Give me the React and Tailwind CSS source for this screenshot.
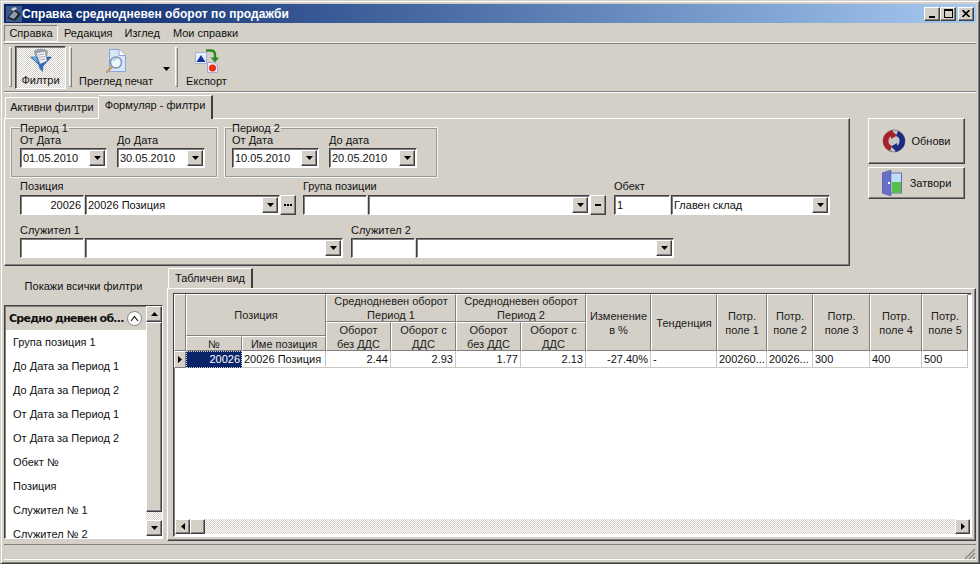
import React from "react";

const raised = "border border-t-white border-l-white border-r-[#404040] border-b-[#404040] shadow-[inset_-1px_-1px_0_#808080]";
const sunken = "border border-t-[#404040] border-l-[#404040] border-r-white border-b-white shadow-[inset_1px_1px_0_#808080]";
const dither = "bg-[repeating-conic-gradient(#d4d0c8_0_25%,#ffffff_0_50%)] bg-[length:2px_2px]";

function Triangle({ dir = "down" }) {
  const points = { down: "0,0 7,0 3.5,4", up: "3.5,0 7,4 0,4", left: "4,0 4,7 0,3.5", right: "0,0 4,3.5 0,7" };
  const size = dir === "down" || dir === "up" ? [7, 4] : [4, 7];
  return (
    <svg width={size[0]} height={size[1]} viewBox={`0 0 ${size[0]} ${size[1]}`}>
      <polygon points={points[dir]} fill="#000" />
    </svg>
  );
}

function SmallButton({ className = "w-4", children }) {
  return <div className={`${raised} bg-[#d4d0c8] flex items-center justify-center shrink-0 ${className}`}>{children}</div>;
}

function Input({ className, text, right }) {
  return (
    <div className={`${sunken} bg-white h-5 flex items-center px-[2px] shrink-0 ${right ? "justify-end" : ""} ${className}`}>
      {text}
    </div>
  );
}

function Combo({ className, text }) {
  return (
    <div className={`${sunken} bg-white h-5 flex items-center justify-between pl-[2px] pr-[1px] shrink-0 ${className}`}>
      <span>{text}</span>
      <SmallButton className="w-4 h-4">
        <Triangle />
      </SmallButton>
    </div>
  );
}

function Period({ title, className, from, to, toLabel }) {
  return (
    <fieldset className={`border border-[#9a9a94] shadow-[0_0_0_1px_#f4f3ef] rounded-none h-[55px] px-2 ${className}`}>
      <legend className="ml-0 px-0 h-3 leading-3 pr-px">{title}</legend>
      <div className="flex gap-[10px]">
        <div className="flex flex-col">
          <div className="h-[14px] leading-[13px]">От Дата</div>
          <Combo className="w-[87px]" text={from} />
        </div>
        <div className="flex flex-col">
          <div className="h-[14px] leading-[13px]">{toLabel}</div>
          <Combo className="w-[88px]" text={to} />
        </div>
      </div>
    </fieldset>
  );
}

function Labeled({ label, className, tall, children }) {
  return (
    <div className={`flex flex-col ${className}`}>
      <div className={`${tall ? "h-[16px]" : "h-[15px]"} leading-[14px]`}>{label}</div>
      <div className="flex gap-px">{children}</div>
    </div>
  );
}

function AppIcon() {
  return (
    <svg width="16" height="16" viewBox="0 0 16 16">
      <rect width="16" height="16" fill="#3d5a86" />
      <path d="M1 12 L8 3 L15 8 L9 15 Z" fill="#20242c" />
      <path d="M3 11 L8 5 L12 8 L8 13 Z" fill="#8f9bb0" />
      <path d="M5 3 L9 1 L11 3 L7 5 Z" fill="#c9d2e0" />
    </svg>
  );
}

function FilterIcon() {
  return (
    <svg width="22" height="24" viewBox="0 0 22 24">
      <path d="M0.5 9 L21.5 9 L13 18 L12.5 23.5 L9.5 20 L9 17 Z" fill="#2f6fc0" stroke="#1c4c90" strokeWidth="0.5" />
      <path d="M4 3 C7 0 15 0 18 3 L17 9 L5 9 Z" fill="#9aa0a8" />
      <path d="M6 5 L15 3 L17 13 L10 16 Z" fill="#f0f2f6" stroke="#7d8694" strokeWidth="0.6" />
      <path d="M8 7 L14 6 M8.5 9.5 L15 8.5 M9.5 12 L15 11" stroke="#8a92a0" strokeWidth="0.7" />
      <path d="M2 9 L6 8 L8 14 L5 13 Z" fill="#70a8e0" />
    </svg>
  );
}

function PreviewIcon() {
  return (
    <svg width="20" height="24" viewBox="0 0 20 24">
      <path d="M3.5 0.5 H13 L19.5 6.5 V22.5 H3.5 Z" fill="#d8e6fa" stroke="#8aa6d8" />
      <path d="M13 0.5 V6.5 H19.5" fill="#fff" stroke="#8aa6d8" />
      <path d="M5.5 18.5 L1 23" stroke="#c89860" strokeWidth="2.4" strokeLinecap="round" />
      <circle cx="10" cy="13.5" r="5.5" fill="#eef6ff" stroke="#7f8fa8" strokeWidth="1.4" />
      <path d="M7 12 A3.5 3.5 0 0 1 11 10" stroke="#9cc4ee" strokeWidth="1.1" fill="none" />
    </svg>
  );
}

function ExportIcon() {
  return (
    <svg width="24" height="24" viewBox="0 0 24 24">
      <rect x="0.5" y="3.5" width="11" height="11" fill="#e6eefc" stroke="#a4b4d8" />
      <polygon points="6,6 10.5,13 1.5,13" fill="#12359a" />
      <path d="M11 1.5 H16 Q20 1.5 20 6 V9" stroke="#2b8a1e" strokeWidth="2.4" fill="none" />
      <polygon points="15.5,8.5 24,8.5 20,13.5" fill="#2b8a1e" />
      <path d="M12.5 13.5 H19 L22.5 16 V23.5 H12.5 Z" fill="#e8e8f4" stroke="#a8a8c4" />
      <circle cx="17.5" cy="19" r="3.5" fill="#ee2a10" />
    </svg>
  );
}

function RefreshIcon() {
  return (
    <svg width="24" height="24" viewBox="0 0 24 24">
      <circle cx="12" cy="12" r="11" fill="#c8c4c8" stroke="#70707a" strokeWidth="0.8" />
      <path d="M11 4 A8 8 0 0 0 9 19.5" stroke="#a8202a" strokeWidth="5.5" fill="none" />
      <polygon points="9,1 15,6.5 9,10" fill="#a8202a" />
      <path d="M13 20 A8 8 0 0 0 15 4.5" stroke="#1c2a80" strokeWidth="5.5" fill="none" />
      <polygon points="15,23 9,17.5 15,14" fill="#1c2a80" />
    </svg>
  );
}

function DoorIcon() {
  return (
    <svg width="20" height="26" viewBox="0 0 20 26">
      <rect x="6" y="3" width="13.5" height="20" fill="#bfe0f4" stroke="#6870b8" />
      <rect x="10" y="12" width="9" height="11" fill="#58c048" />
      <polygon points="0,3 9,0 9,26 0,23" fill="#6a70c8" stroke="#4a4e98" strokeWidth="0.5" />
      <rect x="6" y="12" width="2" height="2" fill="#fff" />
    </svg>
  );
}

function Menu() {
  return (
    <div className="h-[19px] flex items-center pt-[1px]">
      <div className="border border-t-[#808080] border-l-[#808080] border-r-white border-b-white h-[17px] w-[54px] flex items-center justify-center">
        Справка
      </div>
      <div className="ml-[6px]">Редакция</div>
      <div className="ml-[12px]">Изглед</div>
      <div className="ml-[13px]">Мои справки</div>
    </div>
  );
}

function Grip() {
  return <div className="w-[3px] h-[40px] border border-t-white border-l-white border-r-[#808080] border-b-[#808080] shrink-0" />;
}

function Toolbar() {
  return (
    <div className="h-[50px] border-t border-t-[#f4f3ef] border-b border-b-[#808080] shadow-[0_1px_0_#fff,inset_0_1px_0_#808080] flex items-center pl-[5px]">
      <Grip />
      <div className={`${sunken} ${dither} w-[51px] h-[43px] ml-[3px] flex flex-col items-center justify-end pb-[2px] gap-[3px]`}>
        <FilterIcon />
        <span className="leading-[11px]">Филтри</span>
      </div>
      <div className="w-[3px]" />
      <Grip />
      <div className="w-[103px] h-[43px] flex items-center pl-[7px] shrink-0">
        <div className="w-[75px] h-[43px] flex flex-col justify-end pb-[2px] gap-[3px] items-start">
          <div className="ml-[27px]"><PreviewIcon /></div>
          <span className="leading-[11px] whitespace-nowrap">Преглед печат</span>
        </div>
        <div className="ml-[9px] mt-[3px]"><Triangle /></div>
      </div>
      <Grip />
      <div className="w-[43px] ml-[7px] h-[43px] flex flex-col items-center justify-end pb-[2px] gap-[3px]">
        <ExportIcon />
        <span className="leading-[11px]">Експорт</span>
      </div>
    </div>
  );
}

function FormPanel() {
  return (
    <div className="flex mt-[3px] h-[171px]">
      <div className="w-[846px] flex flex-col">
        <div className="h-[23px] flex items-end pl-[1px]">
          <div className="h-[21px] w-[94px] border-t border-l border-white border-r border-r-white flex items-center justify-center pb-[1px]">
            Активни филтри
          </div>
          <div className="h-[24px] w-[114px] border-t border-t-white border-r-2 border-r-[#404040] -mb-px bg-[#d4d0c8] flex items-center justify-center pb-[4px] relative z-10">
            Формуляр - филтри
          </div>
        </div>
        <div className="flex-1 border border-t-white border-l-white border-r-[#404040] border-b-[#404040] shadow-[inset_-1px_-1px_0_#808080] pl-[6px] pt-[3px]">
          <div className="flex gap-[8px]">
            <Period title="Период 1" className="w-[206px]" from="01.05.2010" to="30.05.2010" toLabel="До Дата" />
            <Period title="Период 2" className="w-[212px] pl-[6px]" from="10.05.2010" to="20.05.2010" toLabel="До дата" />
          </div>
          <div className="flex gap-[7px] pl-[9px] mt-[2px]">
            <Labeled tall label="Позиция" className="w-[276px]">
              <Input className="w-[64px]" text="20026" right />
              <Combo className="w-[195px]" text="20026 Позиция" />
              <SmallButton className="w-4 h-5 -ml-px gap-px">
                <div className="w-[2px] h-[2px] bg-black" />
                <div className="w-[2px] h-[2px] bg-black" />
                <div className="w-[2px] h-[2px] bg-black" />
              </SmallButton>
            </Labeled>
            <Labeled tall label="Група позиции" className="w-[304px]">
              <Input className="w-[64px]" />
              <Combo className="w-[222px]" />
              <SmallButton className="w-4 h-5 -ml-px">
                <div className="w-[6px] h-[2px] bg-black" />
              </SmallButton>
            </Labeled>
            <Labeled tall label="Обект" className="w-[216px]">
              <Input className="w-[56px]" text="1" />
              <Combo className="w-[159px]" text="Главен склад" />
            </Labeled>
          </div>
          <div className="flex gap-[8px] pl-[9px] mt-[8px]">
            <Labeled label="Служител 1" className="w-[323px]">
              <Input className="w-[64px]" />
              <Combo className="w-[258px]" />
            </Labeled>
            <Labeled label="Служител 2" className="w-[323px]">
              <Input className="w-[64px]" />
              <Combo className="w-[258px]" />
            </Labeled>
          </div>
        </div>
      </div>
      <div className="ml-[18px] w-[97px] pt-[23px] flex flex-col gap-[3px]">
        <div className={`${raised} h-[46px] flex items-center justify-center gap-[5px]`}>
          <RefreshIcon />
          <span>Обнови</span>
        </div>
        <div className={`${raised} h-[32px] flex items-center justify-center gap-[8px]`}>
          <DoorIcon />
          <span>Затвори</span>
        </div>
      </div>
    </div>
  );
}

const filters = [
  "Група позиция 1",
  "До Дата за Период 1",
  "До Дата за Период 2",
  "От Дата за Период 1",
  "От Дата за Период 2",
  "Обект №",
  "Позиция",
  "Служител № 1",
  "Служител № 2",
];

function FilterList() {
  return (
    <div className="w-[159px] shrink-0 flex flex-col">
      <div className="h-[39px] flex items-center justify-center pt-[1px]">Покажи всички филтри</div>
      <div className={`${sunken} h-[234px] bg-white flex overflow-hidden`}>
        <div className="flex-1 overflow-hidden">
          <div className="h-[23px] mt-px ml-px bg-[#d4d0c8] flex items-center justify-between pl-[3px] pr-[4px]">
            <span className="font-bold font-['DejaVu_Sans',sans-serif] text-[11px] tracking-[-0.75px] whitespace-nowrap">Средно дневен об...</span>
            <div className="w-[15px] h-[15px] rounded-full bg-white border border-[#808080] flex items-center justify-center">
              <svg width="9" height="7" viewBox="0 0 9 7">
                <path d="M1 6 L4.5 1.5 L8 6" stroke="#202020" strokeWidth="1.2" fill="none" />
              </svg>
            </div>
          </div>
          {filters.map((f) => (
            <div key={f} className="h-6 pl-[8px] flex items-center whitespace-nowrap">
              {f}
            </div>
          ))}
        </div>
        <div className="w-4 shrink-0 flex flex-col pb-[2px]">
          <SmallButton className="w-4 h-4"><Triangle dir="up" /></SmallButton>
          <div className={`${raised} bg-[#d4d0c8] w-4 h-[190px]`} />
          <div className={`${dither} flex-1`} />
          <SmallButton className="w-4 h-4"><Triangle /></SmallButton>
        </div>
      </div>
    </div>
  );
}

const head = "bg-[#d4d0c8] border-r border-b border-r-[#808080] border-b-[#808080] border-t border-l border-t-white border-l-white flex items-center justify-center text-center leading-[14px] text-[#202020]";
const cell = "bg-white border-r border-b border-[#c8c8c4] h-[17px] px-[2px] flex items-center whitespace-nowrap overflow-hidden";

function DataGrid() {
  return (
    <div className="grid grid-cols-[12px_56px_84px_65px_65px_65px_65px_65px_66px_50px_46px_57px_52px_46px] grid-rows-[28px_14px_15px_17px] w-[794px]">
      <div className={`${head} row-span-3`} />
      <div className={`${head} col-span-2 row-span-2`}>Позиция</div>
      <div className={`${head} col-span-2`}>Среднодневен оборот<br />Период 1</div>
      <div className={`${head} col-span-2`}>Среднодневен оборот<br />Период 2</div>
      <div className={`${head} row-span-3`}>Изменение<br />в %</div>
      <div className={`${head} row-span-3`}>Тенденция</div>
      <div className={`${head} row-span-3`}>Потр.<br />поле 1</div>
      <div className={`${head} row-span-3`}>Потр.<br />поле 2</div>
      <div className={`${head} row-span-3`}>Потр.<br />поле 3</div>
      <div className={`${head} row-span-3`}>Потр.<br />поле 4</div>
      <div className={`${head} row-span-3`}>Потр.<br />поле 5</div>
      <div className={`${head} row-span-2`}>Оборот<br />без ДДС</div>
      <div className={`${head} row-span-2`}>Оборот с<br />ДДС</div>
      <div className={`${head} row-span-2`}>Оборот<br />без ДДС</div>
      <div className={`${head} row-span-2`}>Оборот с<br />ДДС</div>
      <div className={head}>№</div>
      <div className={head}>Име позиция</div>

      <div className={`${head} h-[17px]`}><Triangle dir="right" /></div>
      <div className="bg-[#0a246a] text-white h-[17px] border border-dotted border-[#d4d0c8] flex items-center justify-end px-px">20026</div>
      <div className={cell}>20026 Позиция</div>
      <div className={`${cell} justify-end`}>2.44</div>
      <div className={`${cell} justify-end`}>2.93</div>
      <div className={`${cell} justify-end`}>1.77</div>
      <div className={`${cell} justify-end`}>2.13</div>
      <div className={`${cell} justify-end`}>-27.40%</div>
      <div className={cell}>-</div>
      <div className={cell}>200260...</div>
      <div className={cell}>20026...</div>
      <div className={cell}>300</div>
      <div className={cell}>400</div>
      <div className={cell}>500</div>
    </div>
  );
}

function TablePane() {
  return (
    <div className="flex-1 flex flex-col ml-[4px] pt-[2px] min-w-0">
      <div className="h-[20px] w-[85px] ml-[1px] border-t border-l border-t-white border-l-white border-r-2 border-r-[#404040] flex items-center justify-center">
        Табличен вид
      </div>
      <div className="flex-1 border border-t-white border-l-white border-r-[#404040] border-b-[#404040] shadow-[inset_-1px_-1px_0_#808080] pt-[4px] pr-[3px] pb-[3px] pl-[5px]">
        <div className={`${sunken} h-full bg-white flex flex-col overflow-hidden`}>
          <div className="flex-1 overflow-hidden"><DataGrid /></div>
          <div className="h-[15px] flex shrink-0 mb-[2px] ml-px mr-px">
            <SmallButton className="w-[15px] h-[15px]"><Triangle dir="left" /></SmallButton>
            <div className={`${raised} bg-[#d4d0c8] w-[15px] h-[15px] shrink-0`} />
            <div className={`${dither} flex-1`} />
            <SmallButton className="w-[15px] h-[15px]"><Triangle dir="right" /></SmallButton>
          </div>
        </div>
      </div>
    </div>
  );
}

export default function App() {
  return (
    <div className="w-[980px] h-[564px] bg-[#d4d0c8] border border-t-[#d4d0c8] border-l-[#d4d0c8] border-r-[#404040] border-b-[#404040] shadow-[inset_1px_1px_0_#fff,inset_-1px_-1px_0_#808080] p-[3px] flex flex-col overflow-hidden font-['Liberation_Sans',sans-serif] text-[11px] leading-none text-[#101010]">
      <div className="h-[19px] shrink-0 bg-gradient-to-r from-[#0a246a] to-[#a6caf0] flex items-center pl-[2px] pr-[2px]">
        <AppIcon />
        <span className="text-white font-bold text-[12px] tracking-[0.05px] whitespace-nowrap">Справка среднодневен оборот по продажби</span>
        <div className="ml-auto flex">
          <SmallButton className="w-4 h-[14px] items-end pb-[2px]"><div className="w-[6px] h-[2px] bg-black" /></SmallButton>
          <SmallButton className="w-4 h-[14px]"><div className="w-[9px] h-[9px] border border-black border-t-2" /></SmallButton>
          <SmallButton className="w-4 h-[14px] ml-[2px]">
            <svg width="8" height="7" viewBox="0 0 8 7"><path d="M0.5 0 L7.5 7 M7.5 0 L0.5 7" stroke="#000" strokeWidth="1.6" /></svg>
          </SmallButton>
        </div>
      </div>
      <Menu />
      <Toolbar />
      <FormPanel />
      <div className="h-[275px] shrink-0 flex">
        <FilterList />
        <TablePane />
      </div>
      <div className="mt-[3px] flex-1 border-t border-t-[#808080] flex justify-end items-end shadow-[inset_0_-1px_0_#fff]">
        <svg width="14" height="14" viewBox="0 0 14 14">
          <path d="M13 3 L3 13 M13 7 L7 13 M13 11 L11 13" stroke="#808080" strokeWidth="1.2" />
        </svg>
      </div>
    </div>
  );
}
